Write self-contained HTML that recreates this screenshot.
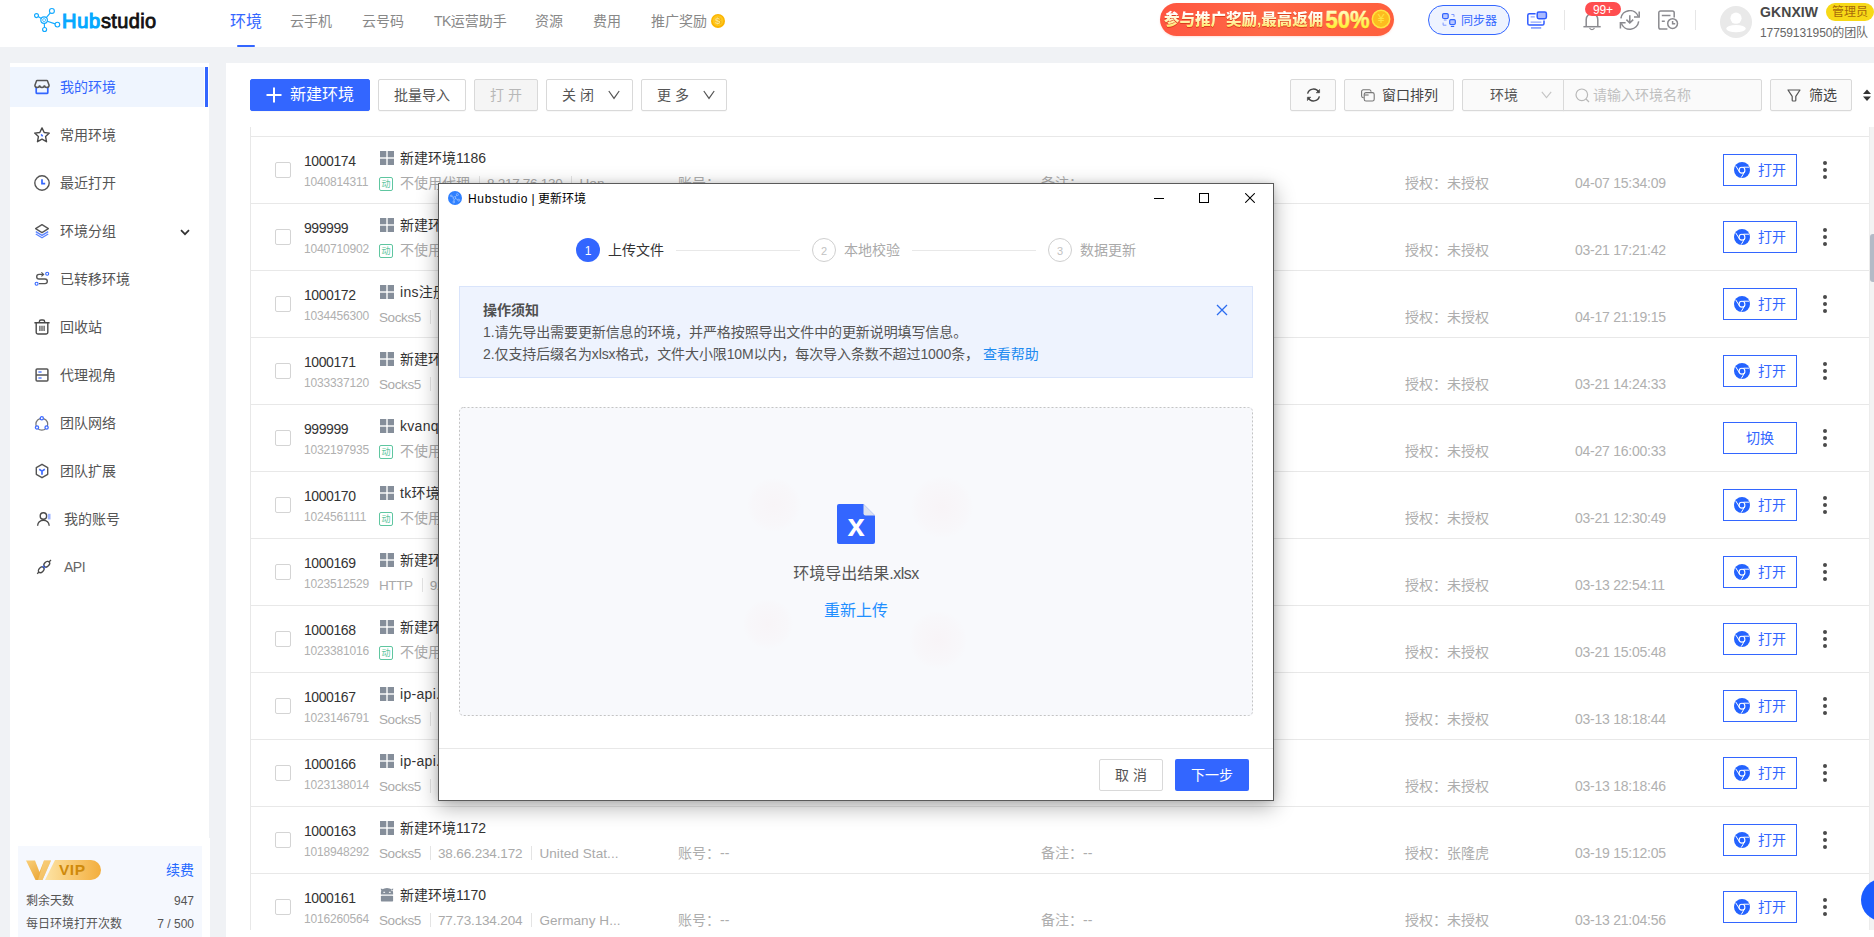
<!DOCTYPE html>
<html lang="zh-CN"><head><meta charset="utf-8"><title>Hubstudio</title>
<style>
*{box-sizing:border-box;margin:0;padding:0}
html,body{width:1874px;height:937px;overflow:hidden;background:#f0f2f5}
body{font-family:"Liberation Sans","Noto Sans CJK SC",sans-serif;font-size:14px;color:#333;-webkit-font-smoothing:antialiased}
#app{position:relative;width:1874px;height:937px;overflow:hidden;background:#f0f2f5}
i{font-style:normal}
b{font-weight:normal}
.abs{position:absolute}
svg{display:block}
/* header */
#hd{position:absolute;left:0;top:0;width:1874px;height:47px;background:#fff}
#hd .logo{position:absolute;left:33px;top:7px}
#hd .logot{position:absolute;left:62px;top:8px;font-size:20px;line-height:26px;font-weight:normal;letter-spacing:.36px;color:#111;white-space:nowrap;-webkit-text-stroke:.8px #111}
#hd .logot em{font-style:normal;color:#06a8ff;-webkit-text-stroke:1.15px #06a8ff;letter-spacing:.75px}
#hd .nav{position:absolute;top:11px;font-size:14px;line-height:20px;color:#888;white-space:nowrap}
#hd .nav.on{color:#3366ff;font-size:16px;top:11px;line-height:22px}
#hd .navbar{position:absolute;left:237px;top:45px;width:18px;height:2px;background:#3366ff;border-radius:1px}
#promo{position:absolute;left:1160px;top:3px;width:234px;height:33px;border-radius:17px;background:linear-gradient(100deg,#ff5540 0%,#ff6846 45%,#ff5f3d 100%);box-shadow:0 1px 2px rgba(255,90,60,.18);overflow:hidden;white-space:nowrap}
#promo .t{position:absolute;left:4px;top:5px;font-size:15.5px;line-height:24px;font-weight:900;letter-spacing:0;background:linear-gradient(#fff 25%,#ffe65a 85%);-webkit-background-clip:text;background-clip:text;color:transparent;filter:drop-shadow(0 1px .5px rgba(190,40,0,.55))}
#promo .n{position:absolute;left:165px;top:1px;font-size:24px;line-height:31px;font-weight:bold;letter-spacing:0;transform:scaleX(.93);transform-origin:0 50%;background:linear-gradient(#fffbd6 22%,#fff02a 78%);-webkit-background-clip:text;background-clip:text;color:transparent;filter:drop-shadow(0 1px .5px rgba(200,50,0,.5))}
#promo .coin{position:absolute;left:211px;top:6px;width:19px;height:19px;border-radius:50%;background:#fdbc1f;border:1.5px solid #ffe14a;font-size:11px;line-height:16px;text-align:center;color:#ffe14a;font-weight:normal}
#sync{position:absolute;left:1428px;top:5px;width:82px;height:30px;border:1px solid #3366ff;border-radius:15px;background:#eef3ff}
#sync span{position:absolute;left:32px;top:6px;font-size:12px;line-height:18px;color:#3366ff;white-space:nowrap}
#sync svg{position:absolute;left:13px;top:7px}
.vdiv{position:absolute;top:10px;width:1px;height:20px;background:#e6e6e6}
#badge{position:absolute;left:1585px;top:2px;width:36px;height:14px;border-radius:7px;background:#ff4d4f;color:#fff;font-size:12px;line-height:16px;text-align:center;letter-spacing:-.2px}
#avatar{position:absolute;left:1720px;top:6px;width:32px;height:32px;border-radius:50%;background:#e9e9e9;overflow:hidden}
#uname{position:absolute;left:1760px;top:2px;font-size:14px;line-height:20px;font-weight:bold;color:#484848;letter-spacing:.1px;white-space:nowrap}
#urole{position:absolute;left:1826px;top:3px;width:48px;height:18px;border-radius:9px;background:#f7d917;color:#a8690a;font-size:12px;line-height:19px;padding-left:6px;white-space:nowrap;overflow:hidden}
#uteam{position:absolute;left:1760px;top:24px;font-size:12px;line-height:18px;color:#666;white-space:nowrap;letter-spacing:-.1px}
/* sidebar */
#sb{position:absolute;left:10px;top:63px;width:199px;height:775px;background:#fff}
#sbb{position:absolute;left:10px;top:838px;width:200px;height:99px;background:#fff}
.mi{position:absolute;left:0;width:199px;height:40px;margin-top:-1px}
.mi.on:before{content:"";position:absolute;left:0;top:0;width:194px;height:40px;background:#eff5fe}
.mi.on:after{content:"";position:absolute;right:1px;top:0;width:3px;height:40px;background:#3366ff}
.mi svg{position:absolute;left:24px;top:12px}
.mi span{position:absolute;left:50px;top:9px;font-size:14px;line-height:22px;color:#555;white-space:nowrap}
.mi.on span{color:#3366ff}
#vip{position:absolute;left:18px;top:846px;width:184px;height:91px;background:#f5f8fe}
#vip .r{position:absolute;font-size:12px;line-height:18px;color:#555;white-space:nowrap}
/* main */
#main{position:absolute;left:226px;top:63px;width:1648px;height:874px;background:#fff}
.btn{position:absolute;top:79px;height:32px;border:1px solid #d9d9d9;border-radius:2px;background:#fff;font-size:14px;line-height:30px;color:#555;text-align:center;white-space:nowrap;box-shadow:0 1px 1px rgba(0,0,0,.03)}
.btn.pri{background:#3366ff;border-color:#3366ff;color:#fff;font-size:16px}
.btn.dis{background:#f5f5f5;color:#b8b8b8}
.btn.g{background:#fafafa}
/* table */
.tbl{position:absolute;left:0;top:0;width:1874px;height:937px;pointer-events:none}
.row{position:absolute;left:250px;width:1619px;height:67px;border-top:1px solid #e8e8e8}
.row span{position:absolute;white-space:nowrap}
.cb{left:25px;top:25px;width:16px;height:16px;border:1px solid #d4d4d4;border-radius:2px;background:#fff}
.no{left:54px;top:14px;font-size:14px;line-height:20px;color:#333;letter-spacing:-.42px}
.idn{left:54px;top:37px;font-size:12px;line-height:16px;color:#b0b0b0;letter-spacing:-.17px}
.osw{left:130px;top:14px;width:14px;height:14px}
.os{width:14px;height:14px;fill:#858e9a}
.nm{left:150px;top:11px;font-size:14px;line-height:20px;color:#333}
.nm.la{letter-spacing:.3px}
.dong{left:129px;top:40px;width:14px;height:14px;border:1px solid #5fc6a0;border-radius:2px;color:#5fc6a0;font-size:9px;line-height:13px;text-align:center}
.px{left:129px;top:37px;font-size:13.5px;line-height:20px;color:#aaa;letter-spacing:-.15px}
.px .p0{letter-spacing:-.38px}.px .p2{letter-spacing:.08px}
.px2{left:150px;top:36px;letter-spacing:0;font-size:14px}
.px2 .p0{letter-spacing:0}.px2 span+i+span,.px2 span+i+span+i+span{font-size:13.5px;letter-spacing:-.28px}
.px span{position:static!important}
.sep{display:inline-block;width:1px;height:14px;background:#e4e4e4;margin:0 7px 0 9px;vertical-align:-2px}
.acc{left:428px;top:36px;font-size:14px;line-height:20px;color:#adadad}
.note{left:791px;top:36px;font-size:14px;line-height:20px;color:#adadad}
.auth{left:1155px;top:36px;font-size:14px;line-height:20px;color:#adadad}
.date{left:1325px;top:36px;font-size:14px;line-height:20px;color:#b0b0b0;letter-spacing:-.24px}
.obtn{left:1473px;top:17px;width:74px;height:32px;border:1px solid #3366ff;border-radius:0;background:#fff}
.obtn .chr{position:absolute;left:10px;top:7px;width:16px;height:16px}
.obtn b{position:absolute;left:34px;top:5px;font-size:14px;line-height:20px;color:#3366ff}
.obtn.sw b{left:22px}
.dots{left:1572px;top:24px;width:6px;height:20px}
.dots i{position:absolute;left:1px;width:4px;height:4px;border-radius:50%;background:#4a4a4a}
.dots i:nth-child(1){top:0}.dots i:nth-child(2){top:7px}.dots i:nth-child(3){top:14px}
/* dialog */
#dlg{position:absolute;left:438px;top:183px;width:836px;height:618px;background:#fff;border:1px solid #5a5a5a;box-shadow:0 6px 20px rgba(0,0,0,.32),0 0 6px rgba(0,0,0,.12)}
#dlg .abs{white-space:nowrap}

</style></head>
<body>
<div id="app">
<div id="hd">
<svg class="logo" width="30" height="26" viewBox="0 0 30 26" fill="none" stroke="#12a9ff" stroke-width="1.15">
<circle cx="11.1" cy="13.1" r="3.3"/><circle cx="11.1" cy="13.1" r="1.5" stroke-width=".9" opacity=".8"/>
<circle cx="3.5" cy="8.6" r="1.95"/><circle cx="18.9" cy="3.9" r="2.45"/><circle cx="24.4" cy="17.6" r="2.35"/><circle cx="11.6" cy="22.5" r="2"/>
<path d="M5.2 9.6 L8.3 11.4 M13.3 10.6 L17.3 5.8 M14.3 14.2 L22.1 16.9 M11.3 16.4 L11.5 20.5"/>
</svg>
<div class="logot"><em>Hub</em>studio</div>
<div class="nav on" style="left:230px">环境</div>
<div class="navbar"></div>
<div class="nav" style="left:290px">云手机</div>
<div class="nav" style="left:362px">云号码</div>
<div class="nav" style="left:434px"><span style="letter-spacing:-.6px">TK</span>运营助手</div>
<div class="nav" style="left:535px">资源</div>
<div class="nav" style="left:593px">费用</div>
<div class="nav" style="left:651px">推广奖励</div>
<svg class="abs" style="left:711px;top:14px" width="14" height="14" viewBox="0 0 14 14"><circle cx="7" cy="7" r="7" fill="#fbb400"/><circle cx="7" cy="6.6" r="5.4" fill="#ffc61c"/><text x="7.5" y="10.4" font-size="9.5" font-weight="bold" text-anchor="middle" fill="#d98200" font-family="Liberation Sans,sans-serif">$</text><text x="7" y="10" font-size="9.5" font-weight="bold" text-anchor="middle" fill="#ffe98a" font-family="Liberation Sans,sans-serif">$</text></svg>

<div id="promo"><span class="t">参与推广奖励,最高返佣</span>
<svg class="abs" style="left:160px;top:0" width="74" height="33" viewBox="0 0 74 33"><defs><linearGradient id="pg" x1="0" y1="0" x2="0" y2="1"><stop offset=".1" stop-color="#fffde0"/><stop offset=".55" stop-color="#fff66a"/><stop offset=".95" stop-color="#ffee1c"/></linearGradient></defs>
<text x="5.5" y="25.6" font-size="24" font-weight="bold" font-family="Liberation Sans,sans-serif" textLength="44" lengthAdjust="spacingAndGlyphs" fill="#d8430c" opacity=".45">50%</text>
<text x="5.5" y="24.6" font-size="24" font-weight="bold" font-family="Liberation Sans,sans-serif" textLength="44" lengthAdjust="spacingAndGlyphs" fill="url(#pg)" stroke="url(#pg)" stroke-width=".5">50%</text>
<circle cx="61" cy="16" r="8.7" fill="#fdbc1f" stroke="#ffe341" stroke-width="1.5"/>
<text x="61" y="20.4" font-size="12" text-anchor="middle" font-family="Liberation Sans,sans-serif" fill="#ffe341">¥</text></svg></div>

<div id="sync"><svg width="15" height="15" viewBox="0 0 15 15" fill="none" stroke="#3366ff" stroke-width="1.2"><rect x=".6" y=".6" width="5.6" height="4.9" rx="1.2" fill="#b9c7ff"/><path d="M1.8 7 H4.6" stroke="#8fa6ff"/><rect x="7.7" y="6.6" width="5.6" height="4.9" rx="1.2" fill="#b9c7ff"/><path d="M8.8 13.4 H12.2"/><path d="M9.4 1.5 H12 V3.9 M1.1 9.6 V12.2 H4.4" stroke="#7d98ff" stroke-width="1"/></svg><span>同步器</span></div>

<svg class="abs" style="left:1526px;top:10px" width="22" height="20" viewBox="0 0 22 20" fill="none" stroke="#2f5bff" stroke-width="1.5">
<path d="M9.6 3.7 H3.4 a1.6 1.6 0 0 0 -1.6 1.6 V13.4 a1.6 1.6 0 0 0 1.6 1.6 H16.4 a1.6 1.6 0 0 0 1.6 -1.6 V10.4"/>
<rect x="11.2" y="1.9" width="9.2" height="6.8" rx="1.6" fill="#a9b9ff"/>
<path d="M4.6 6.9 H8.8 M4.6 12.1 H15.4" stroke="#8fa6ff" stroke-width="1.4"/><path d="M5 17.9 H15.2" stroke="#8fa6ff" stroke-width="1.8"/>
</svg>
<div class="vdiv" style="left:1564px"></div>
<svg class="abs" style="left:1583px;top:13px" width="18" height="19" viewBox="0 0 18 19" fill="none" stroke="#8a8a8f" stroke-width="1.5"><path d="M3.2 13.6 V6.4 a5.8 5.8 0 0 1 11.6 0 V13.6"/><path d="M0.4 13.7 H17.7"/><path d="M6.6 14.9 a2.5 2.4 0 0 0 4.8 0" stroke-width="1.2"/></svg>
<div id="badge">99+</div>
<svg class="abs" style="left:1619px;top:10px" width="22" height="20" viewBox="0 0 22 20" fill="none" stroke="#8a8a8f" stroke-width="1.5"><path d="M1.9 8.4 A9 9 0 0 1 19.3 6.6 M19.7 11.4 A9 9 0 0 1 2.3 13.2"/><path d="M20.2 1.4 V7 H15 M1.4 18.4 V12.8 H6.6"/><path d="M10.8 5.2 V12.8 M7.4 9.6 L10.8 13 L14.2 9.6"/></svg>
<svg class="abs" style="left:1658px;top:10px" width="21" height="20" viewBox="0 0 21 20" fill="none" stroke="#8a8a8f" stroke-width="1.5"><path d="M16.2 7.4 V2.8 a1.8 1.8 0 0 0 -1.8 -1.8 H2.6 a1.8 1.8 0 0 0 -1.8 1.8 V17.2 a1.8 1.8 0 0 0 1.8 1.8 H9.4"/><path d="M3.8 5.6 H12.5 M3.8 11.3 H6.8"/><circle cx="14.6" cy="13.6" r="4.9"/><path d="M14.6 11 V13.8 H17.2"/></svg>
<div class="vdiv" style="left:1695px"></div>
<div id="avatar"><svg width="32" height="32" viewBox="0 0 32 32"><circle cx="16" cy="12.2" r="5.6" fill="#fff"/><ellipse cx="16" cy="22.6" rx="9.8" ry="3.7" fill="#fff"/></svg></div>
<div id="uname">GKNXIW</div>
<div id="urole">管理员</div>
<div id="uteam">17759131950的团队</div>
</div>
<div id="sb">
<div class="mi on" style="top:5px"><svg width="16" height="16" viewBox="0 0 16 16" fill="none" stroke-width="1.5"><path d="M2.2 8 V13.4 a1 1 0 0 0 1 1 H12.8 a1 1 0 0 0 1 -1 V8" stroke="#3366ff" stroke-width="1.7"/><path d="M0.9 6.2 L2.5 1.9 a.8 .8 0 0 1 .7 -.5 H12.8 a.8 .8 0 0 1 .7 .5 L15.1 6.2 a2.35 2.2 0 0 1 -4.7 0 a2.35 2.2 0 0 1 -4.8 0 A2.35 2.2 0 0 1 .9 6.2 Z" stroke="#555"/></svg><span>我的环境</span></div>
<div class="mi" style="top:53px"><svg width="16" height="16" viewBox="0 0 16 16" fill="none" stroke="#4a4a4a" stroke-width="1.4" stroke-linejoin="round"><path d="M8 0.9 L10.2 5.5 L15.3 6.1 L11.6 9.6 L12.5 14.7 L8 12.2 L3.5 14.7 L4.4 9.6 L0.7 6.1 L5.8 5.5 Z"/><path d="M7.2 7.4 L8.6 9.4" stroke="#3366ff" stroke-width="1.6"/></svg><span>常用环境</span></div>
<div class="mi" style="top:101px"><svg width="16" height="16" viewBox="0 0 16 16" fill="none" stroke="#555" stroke-width="1.4"><circle cx="8" cy="8" r="7.2"/><path d="M8 4.2 V8.6 H11.2" stroke="#3366ff" stroke-width="1.7"/></svg><span>最近打开</span></div>
<div class="mi" style="top:149px"><svg width="16" height="16" viewBox="0 0 16 16" fill="none" stroke="#555" stroke-width="1.3" stroke-linejoin="round"><path d="M8 1.6 L14.4 5.6 L8 9.6 L1.6 5.6 Z"/><path d="M1.8 8.6 L8 12.4 L14.2 8.6 M1.8 11 L8 14.8 L14.2 11" stroke="#5b83ff"/></svg><span>环境分组</span>
<svg style="left:170px;top:18px" width="10" height="7" viewBox="0 0 10 7" fill="none" stroke="#333" stroke-width="1.7"><path d="M1 1.2 L5 5.2 L9 1.2"/></svg></div>
<div class="mi" style="top:197px"><svg width="16" height="16" viewBox="0 0 16 16" fill="none" stroke="#555" stroke-width="1.4"><path d="M9 3.4 H5 a2.3 2.3 0 0 0 0 4.6 H11 a2.3 2.3 0 0 1 0 4.6 H5"/><path d="M7.4 1.4 L9.6 3.4 L7.4 5.4" stroke-width="1.2"/><circle cx="13.2" cy="2.8" r="1.5" stroke="#3366ff" stroke-width="1.1"/><circle cx="2.6" cy="12.8" r="1.5" stroke="#3366ff" stroke-width="1.1"/></svg><span>已转移环境</span></div>
<div class="mi" style="top:245px"><svg width="16" height="16" viewBox="0 0 16 16" fill="none" stroke="#4a4a4a" stroke-width="1.4"><path d="M0.4 3.8 H15.6 M5.4 3.6 V2.6 a1.6 1.6 0 0 1 1.6 -1.6 H9 a1.6 1.6 0 0 1 1.6 1.6 V3.6 M2.2 4 V13.2 a1.8 1.8 0 0 0 1.8 1.8 H12 a1.8 1.8 0 0 0 1.8 -1.8 V4"/><path d="M5.9 6.8 V12 M8 6.8 V12 M10.1 6.8 V12" stroke-width="1.2"/></svg><span>回收站</span></div>
<div class="mi" style="top:293px"><svg width="16" height="16" viewBox="0 0 16 16" fill="none" stroke="#555" stroke-width="1.5"><rect x="2.1" y="2.1" width="11.8" height="11.8" rx="1"/><path d="M2.1 8 H13.9"/><path d="M4.4 5 H7.6 M4.4 11 H7.6" stroke="#5b83ff" stroke-width="1.4"/></svg><span>代理视角</span></div>
<div class="mi" style="top:341px"><svg width="16" height="16" viewBox="0 0 16 16" fill="none"><circle cx="7.8" cy="9.2" r="5.9" stroke="#777" stroke-width="1.2"/><g fill="#fff" stroke="#3f6bff" stroke-width="1.3"><circle cx="7.8" cy="3.3" r="1.6"/><circle cx="3" cy="12.5" r="1.6"/><circle cx="12.6" cy="12.5" r="1.6"/></g></svg><span>团队网络</span></div>
<div class="mi" style="top:389px"><svg width="16" height="16" viewBox="0 0 16 16" fill="none" stroke="#555" stroke-width="1.4" stroke-linejoin="round"><path d="M8 1.3 L13.7 4.65 V11.35 L8 14.7 L2.3 11.35 V4.65 Z"/><path d="M5.2 6.3 L8 8.1 L10.8 6.3 M8 8.1 V11.8" stroke="#3f6bff" stroke-width="1.7"/></svg><span>团队扩展</span></div>
<div class="mi" style="top:437px"><svg style="left:26px" width="16" height="16" viewBox="0 0 16 16" fill="none" stroke="#4a4a4a" stroke-width="1.4"><circle cx="7.4" cy="5" r="3.2"/><path d="M1.6 14.8 a5.8 5.6 0 0 1 11.6 0"/><rect x="11.8" y="2.8" width="2.7" height="5.6" fill="#9db4ff" stroke="none"/></svg><span style="left:54px">我的账号</span></div>
<div class="mi" style="top:485px"><svg style="left:26px" width="16" height="16" viewBox="0 0 16 16" fill="none" stroke="#4a4a4a" stroke-width="1.3"><path d="M1.2 14.8 L3.3 12.7 M12.7 3.3 L15 1"/><ellipse cx="5.2" cy="10.8" rx="2.3" ry="3.3" transform="rotate(45 5.2 10.8)"/><ellipse cx="10.8" cy="5.2" rx="2.3" ry="3.3" transform="rotate(45 10.8 5.2)"/><path d="M6.6 8 L8 6.6 M8 9.4 L9.4 8" stroke="#3f6bff" stroke-width="1.3"/></svg><span style="left:54px;color:#666;letter-spacing:-.5px">API</span></div>
</div>
<div id="sbb"></div>
<div id="vip">
<svg class="abs" style="left:8px;top:13px" width="76" height="22" viewBox="0 0 76 22"><defs><linearGradient id="vg" x1="0" y1="0" x2="1" y2="0"><stop offset="0" stop-color="#fde3a4"/><stop offset="1" stop-color="#f3ae3d"/></linearGradient><linearGradient id="vg2" x1="0" y1="0" x2="1" y2="1"><stop offset="0" stop-color="#f9cf7a"/><stop offset="1" stop-color="#e79a22"/></linearGradient></defs>
<path d="M29 1 H65 a10 10 0 0 1 0 20 H19 Z" fill="url(#vg)"/>
<path d="M0 1.4 H9 L13.5 13 L18 1.4 H25 L16.5 21 H9.5 Z" fill="url(#vg2)"/>
<path d="M18 1.4 H25 L16.5 21 H12 Z" fill="#fbd98e" opacity=".55"/>
<text x="33" y="16.2" font-size="15.5" font-weight="bold" fill="#cf8a0c" font-family="Liberation Sans,sans-serif" letter-spacing=".5">VIP</text></svg>
<div class="r" style="left:148px;top:13px;font-size:14px;line-height:22px;color:#2468ff">续费</div>
<div class="r" style="left:8px;top:46px">剩余天数</div><div class="r" style="right:8px;top:46px">947</div>
<div class="r" style="left:8px;top:69px">每日环境打开次数</div><div class="r" style="right:8px;top:69px">7 / 500</div>
</div>
<div id="main"></div>
<div class="btn pri" style="left:250px;width:120px"><svg class="abs" style="left:15px;top:7px" width="16" height="16" viewBox="0 0 16 16" stroke="#fff" stroke-width="2" fill="none"><path d="M8 0.5 V15.5 M0.5 8 H15.5"/></svg><span class="abs" style="left:39px;top:0">新建环境</span></div>
<div class="btn" style="left:378px;width:88px">批量导入</div>
<div class="btn dis" style="left:474px;width:64px">打 开</div>
<div class="btn" style="left:546px;width:87px"><span class="abs" style="left:15px;top:0">关 闭</span><svg class="abs" style="left:61px;top:10px" width="12" height="10" viewBox="0 0 12 10" fill="none" stroke="#555" stroke-width="1.2"><path d="M0.8 1 L6 8.4 L11.2 1"/></svg></div>
<div class="btn" style="left:641px;width:86px"><span class="abs" style="left:15px;top:0">更 多</span><svg class="abs" style="left:61px;top:10px" width="12" height="10" viewBox="0 0 12 10" fill="none" stroke="#555" stroke-width="1.2"><path d="M0.8 1 L6 8.4 L11.2 1"/></svg></div>

<div class="btn g" style="left:1290px;width:46px"><svg class="abs" style="left:15px;top:8px" width="15" height="14" viewBox="0 0 15 14" fill="none" stroke="#444" stroke-width="1.4"><path d="M1.6 5.6 A6 6 0 0 1 12.8 4.4 M13.4 8.4 A6 6 0 0 1 2.2 9.6"/><path d="M13.6 1.4 V4.8 H10.2 Z M1.4 12.6 V9.2 H4.8 Z" fill="#444" stroke-width=".6"/></svg></div>
<div class="btn g" style="left:1344px;width:110px"><svg class="abs" style="left:16px;top:9px" width="14" height="13" viewBox="0 0 14 13" fill="none" stroke="#777" stroke-width="1.1"><path d="M2.6 8.6 H2.2 a1.6 1.6 0 0 1 -1.6 -1.6 V2.4 a1.6 1.6 0 0 1 1.6 -1.6 H8.4 a1.6 1.6 0 0 1 1.6 1.6 V2.8"/><rect x="3.2" y="3.6" width="10" height="8.4" rx="1.8"/><path d="M3.4 6 H7.6"/></svg><span class="abs" style="left:37px;top:0;color:#444">窗口排列</span></div>
<div class="btn g" style="left:1462px;width:102px;border-radius:2px 0 0 2px"><span class="abs" style="left:27px;top:0;color:#555">环境</span><svg class="abs" style="left:78px;top:11px" width="11" height="8" viewBox="0 0 11 8" fill="none" stroke="#c4c4c4" stroke-width="1.1"><path d="M0.8 0.8 L5.5 6.6 L10.2 0.8"/></svg></div>
<div class="btn g" style="left:1563px;width:199px;border-radius:0 2px 2px 0;text-align:left"><svg class="abs" style="left:11px;top:8px" width="15" height="15" viewBox="0 0 15 15" fill="none" stroke="#b8b8b8" stroke-width="1.2"><circle cx="6.8" cy="6.8" r="5.8"/><path d="M11 11 L14 14"/></svg><span class="abs" style="left:29px;top:0;color:#c0c0c0">请输入环境名称</span></div>
<div class="btn g" style="left:1770px;width:82px"><svg class="abs" style="left:16px;top:9px" width="14" height="13" viewBox="0 0 14 13" fill="none" stroke="#555" stroke-width="1.2" stroke-linejoin="round"><path d="M1 1 H13 L8.8 7.4 V11.2 a.8 .8 0 0 1 -.8 .8 H6 a.8 .8 0 0 1 -.8 -.8 V7.4 Z"/></svg><span class="abs" style="left:38px;top:0;color:#444">筛选</span></div>
<svg class="abs" style="left:1862px;top:89px" width="10" height="13" viewBox="0 0 10 13" fill="#333"><path d="M1 5 L5 0.6 L9 5 Z M1 7.6 L5 12 L9 7.6 Z"/></svg>
<div class="abs" style="left:250px;top:127px;width:1px;height:803px;background:#e8e8e8"></div>
<div class="tbl">
<div class="row" style="top:136px"><span class="cb"></span><span class="no">1000174</span><span class="idn">1040814311</span><span class="osw"><svg class="os" viewBox="0 0 14 14"><rect x="0" y="0" width="6.3" height="6.3"/><rect x="7.7" y="0" width="6.3" height="6.3"/><rect x="0" y="7.7" width="6.3" height="6.3"/><rect x="7.7" y="7.7" width="6.3" height="6.3"/></svg></span><span class="nm">新建环境1186</span><span class="dong">动</span><span class="px px2"><span class="p0">不使用代理</span><i class="sep"></i><span class="p1">8.217.76.130</span><i class="sep"></i><span class="p2">Hon...</span></span><span class="acc">账号：</span><span class="note">备注：</span><span class="auth">授权：未授权</span><span class="date">04-07 15:34:09</span><span class="obtn"><svg class="chr" viewBox="0 0 16 16"><circle cx="8" cy="8" r="8" fill="#2463ff"/><circle cx="8" cy="8.2" r="2.9" fill="none" stroke="#fff" stroke-width="1.1"/><path d="M9.4 5.2 H15.2 M5.6 10 L1.8 4 M10.6 9.8 L7.2 15.6" stroke="#fff" stroke-width="1" fill="none"/></svg><b>打开</b></span><span class="dots"><i></i><i></i><i></i></span></div>
<div class="row" style="top:203px"><span class="cb"></span><span class="no">999999</span><span class="idn">1040710902</span><span class="osw"><svg class="os" viewBox="0 0 14 14"><rect x="0" y="0" width="6.3" height="6.3"/><rect x="7.7" y="0" width="6.3" height="6.3"/><rect x="0" y="7.7" width="6.3" height="6.3"/><rect x="7.7" y="7.7" width="6.3" height="6.3"/></svg></span><span class="nm">新建环境1185</span><span class="dong">动</span><span class="px px2"><span class="p0">不使用代理</span></span><span class="acc">账号：--</span><span class="note">备注：--</span><span class="auth">授权：未授权</span><span class="date">03-21 17:21:42</span><span class="obtn"><svg class="chr" viewBox="0 0 16 16"><circle cx="8" cy="8" r="8" fill="#2463ff"/><circle cx="8" cy="8.2" r="2.9" fill="none" stroke="#fff" stroke-width="1.1"/><path d="M9.4 5.2 H15.2 M5.6 10 L1.8 4 M10.6 9.8 L7.2 15.6" stroke="#fff" stroke-width="1" fill="none"/></svg><b>打开</b></span><span class="dots"><i></i><i></i><i></i></span></div>
<div class="row" style="top:270px"><span class="cb"></span><span class="no">1000172</span><span class="idn">1034456300</span><span class="osw"><svg class="os" viewBox="0 0 14 14"><rect x="0" y="0" width="6.3" height="6.3"/><rect x="7.7" y="0" width="6.3" height="6.3"/><rect x="0" y="7.7" width="6.3" height="6.3"/><rect x="7.7" y="7.7" width="6.3" height="6.3"/></svg></span><span class="nm la">ins注册</span><span class="px"><span class="p0">Socks5</span><i class="sep"></i><span class="p1">38.66.234.172</span></span><span class="acc">账号：--</span><span class="note">备注：--</span><span class="auth">授权：未授权</span><span class="date">04-17 21:19:15</span><span class="obtn"><svg class="chr" viewBox="0 0 16 16"><circle cx="8" cy="8" r="8" fill="#2463ff"/><circle cx="8" cy="8.2" r="2.9" fill="none" stroke="#fff" stroke-width="1.1"/><path d="M9.4 5.2 H15.2 M5.6 10 L1.8 4 M10.6 9.8 L7.2 15.6" stroke="#fff" stroke-width="1" fill="none"/></svg><b>打开</b></span><span class="dots"><i></i><i></i><i></i></span></div>
<div class="row" style="top:337px"><span class="cb"></span><span class="no">1000171</span><span class="idn">1033337120</span><span class="osw"><svg class="os" viewBox="0 0 14 14"><rect x="0" y="0" width="6.3" height="6.3"/><rect x="7.7" y="0" width="6.3" height="6.3"/><rect x="0" y="7.7" width="6.3" height="6.3"/><rect x="7.7" y="7.7" width="6.3" height="6.3"/></svg></span><span class="nm">新建环境1183</span><span class="px"><span class="p0">Socks5</span><i class="sep"></i><span class="p1">38.66.234.172</span></span><span class="acc">账号：--</span><span class="note">备注：--</span><span class="auth">授权：未授权</span><span class="date">03-21 14:24:33</span><span class="obtn"><svg class="chr" viewBox="0 0 16 16"><circle cx="8" cy="8" r="8" fill="#2463ff"/><circle cx="8" cy="8.2" r="2.9" fill="none" stroke="#fff" stroke-width="1.1"/><path d="M9.4 5.2 H15.2 M5.6 10 L1.8 4 M10.6 9.8 L7.2 15.6" stroke="#fff" stroke-width="1" fill="none"/></svg><b>打开</b></span><span class="dots"><i></i><i></i><i></i></span></div>
<div class="row" style="top:404px"><span class="cb"></span><span class="no">999999</span><span class="idn">1032197935</span><span class="osw"><svg class="os" viewBox="0 0 14 14"><rect x="0" y="0" width="6.3" height="6.3"/><rect x="7.7" y="0" width="6.3" height="6.3"/><rect x="0" y="7.7" width="6.3" height="6.3"/><rect x="7.7" y="7.7" width="6.3" height="6.3"/></svg></span><span class="nm la">kvanqi</span><span class="dong">动</span><span class="px px2"><span class="p0">不使用代理</span></span><span class="acc">账号：--</span><span class="note">备注：--</span><span class="auth">授权：未授权</span><span class="date">04-27 16:00:33</span><span class="obtn sw"><b>切换</b></span><span class="dots"><i></i><i></i><i></i></span></div>
<div class="row" style="top:471px"><span class="cb"></span><span class="no">1000170</span><span class="idn">1024561111</span><span class="osw"><svg class="os" viewBox="0 0 14 14"><rect x="0" y="0" width="6.3" height="6.3"/><rect x="7.7" y="0" width="6.3" height="6.3"/><rect x="0" y="7.7" width="6.3" height="6.3"/><rect x="7.7" y="7.7" width="6.3" height="6.3"/></svg></span><span class="nm la">tk环境</span><span class="dong">动</span><span class="px px2"><span class="p0">不使用代理</span></span><span class="acc">账号：--</span><span class="note">备注：--</span><span class="auth">授权：未授权</span><span class="date">03-21 12:30:49</span><span class="obtn"><svg class="chr" viewBox="0 0 16 16"><circle cx="8" cy="8" r="8" fill="#2463ff"/><circle cx="8" cy="8.2" r="2.9" fill="none" stroke="#fff" stroke-width="1.1"/><path d="M9.4 5.2 H15.2 M5.6 10 L1.8 4 M10.6 9.8 L7.2 15.6" stroke="#fff" stroke-width="1" fill="none"/></svg><b>打开</b></span><span class="dots"><i></i><i></i><i></i></span></div>
<div class="row" style="top:538px"><span class="cb"></span><span class="no">1000169</span><span class="idn">1023512529</span><span class="osw"><svg class="os" viewBox="0 0 14 14"><rect x="0" y="0" width="6.3" height="6.3"/><rect x="7.7" y="0" width="6.3" height="6.3"/><rect x="0" y="7.7" width="6.3" height="6.3"/><rect x="7.7" y="7.7" width="6.3" height="6.3"/></svg></span><span class="nm">新建环境1178</span><span class="px"><span class="p0">HTTP</span><i class="sep"></i><span class="p1">92.113.7.44</span></span><span class="acc">账号：--</span><span class="note">备注：--</span><span class="auth">授权：未授权</span><span class="date">03-13 22:54:11</span><span class="obtn"><svg class="chr" viewBox="0 0 16 16"><circle cx="8" cy="8" r="8" fill="#2463ff"/><circle cx="8" cy="8.2" r="2.9" fill="none" stroke="#fff" stroke-width="1.1"/><path d="M9.4 5.2 H15.2 M5.6 10 L1.8 4 M10.6 9.8 L7.2 15.6" stroke="#fff" stroke-width="1" fill="none"/></svg><b>打开</b></span><span class="dots"><i></i><i></i><i></i></span></div>
<div class="row" style="top:605px"><span class="cb"></span><span class="no">1000168</span><span class="idn">1023381016</span><span class="osw"><svg class="os" viewBox="0 0 14 14"><rect x="0" y="0" width="6.3" height="6.3"/><rect x="7.7" y="0" width="6.3" height="6.3"/><rect x="0" y="7.7" width="6.3" height="6.3"/><rect x="7.7" y="7.7" width="6.3" height="6.3"/></svg></span><span class="nm">新建环境1177</span><span class="dong">动</span><span class="px px2"><span class="p0">不使用代理</span></span><span class="acc">账号：--</span><span class="note">备注：--</span><span class="auth">授权：未授权</span><span class="date">03-21 15:05:48</span><span class="obtn"><svg class="chr" viewBox="0 0 16 16"><circle cx="8" cy="8" r="8" fill="#2463ff"/><circle cx="8" cy="8.2" r="2.9" fill="none" stroke="#fff" stroke-width="1.1"/><path d="M9.4 5.2 H15.2 M5.6 10 L1.8 4 M10.6 9.8 L7.2 15.6" stroke="#fff" stroke-width="1" fill="none"/></svg><b>打开</b></span><span class="dots"><i></i><i></i><i></i></span></div>
<div class="row" style="top:672px"><span class="cb"></span><span class="no">1000167</span><span class="idn">1023146791</span><span class="osw"><svg class="os" viewBox="0 0 14 14"><rect x="0" y="0" width="6.3" height="6.3"/><rect x="7.7" y="0" width="6.3" height="6.3"/><rect x="0" y="7.7" width="6.3" height="6.3"/><rect x="7.7" y="7.7" width="6.3" height="6.3"/></svg></span><span class="nm la">ip-api.com</span><span class="px"><span class="p0">Socks5</span><i class="sep"></i><span class="p1">38.66.234.172</span></span><span class="acc">账号：--</span><span class="note">备注：--</span><span class="auth">授权：未授权</span><span class="date">03-13 18:18:44</span><span class="obtn"><svg class="chr" viewBox="0 0 16 16"><circle cx="8" cy="8" r="8" fill="#2463ff"/><circle cx="8" cy="8.2" r="2.9" fill="none" stroke="#fff" stroke-width="1.1"/><path d="M9.4 5.2 H15.2 M5.6 10 L1.8 4 M10.6 9.8 L7.2 15.6" stroke="#fff" stroke-width="1" fill="none"/></svg><b>打开</b></span><span class="dots"><i></i><i></i><i></i></span></div>
<div class="row" style="top:739px"><span class="cb"></span><span class="no">1000166</span><span class="idn">1023138014</span><span class="osw"><svg class="os" viewBox="0 0 14 14"><rect x="0" y="0" width="6.3" height="6.3"/><rect x="7.7" y="0" width="6.3" height="6.3"/><rect x="0" y="7.7" width="6.3" height="6.3"/><rect x="7.7" y="7.7" width="6.3" height="6.3"/></svg></span><span class="nm la">ip-api.com</span><span class="px"><span class="p0">Socks5</span><i class="sep"></i><span class="p1">38.66.234.172</span></span><span class="acc">账号：--</span><span class="note">备注：--</span><span class="auth">授权：未授权</span><span class="date">03-13 18:18:46</span><span class="obtn"><svg class="chr" viewBox="0 0 16 16"><circle cx="8" cy="8" r="8" fill="#2463ff"/><circle cx="8" cy="8.2" r="2.9" fill="none" stroke="#fff" stroke-width="1.1"/><path d="M9.4 5.2 H15.2 M5.6 10 L1.8 4 M10.6 9.8 L7.2 15.6" stroke="#fff" stroke-width="1" fill="none"/></svg><b>打开</b></span><span class="dots"><i></i><i></i><i></i></span></div>
<div class="row" style="top:806px"><span class="cb"></span><span class="no">1000163</span><span class="idn">1018948292</span><span class="osw"><svg class="os" viewBox="0 0 14 14"><rect x="0" y="0" width="6.3" height="6.3"/><rect x="7.7" y="0" width="6.3" height="6.3"/><rect x="0" y="7.7" width="6.3" height="6.3"/><rect x="7.7" y="7.7" width="6.3" height="6.3"/></svg></span><span class="nm">新建环境1172</span><span class="px"><span class="p0">Socks5</span><i class="sep"></i><span class="p1">38.66.234.172</span><i class="sep"></i><span class="p2">United Stat...</span></span><span class="acc">账号：--</span><span class="note">备注：--</span><span class="auth">授权：张隆虎</span><span class="date">03-19 15:12:05</span><span class="obtn"><svg class="chr" viewBox="0 0 16 16"><circle cx="8" cy="8" r="8" fill="#2463ff"/><circle cx="8" cy="8.2" r="2.9" fill="none" stroke="#fff" stroke-width="1.1"/><path d="M9.4 5.2 H15.2 M5.6 10 L1.8 4 M10.6 9.8 L7.2 15.6" stroke="#fff" stroke-width="1" fill="none"/></svg><b>打开</b></span><span class="dots"><i></i><i></i><i></i></span></div>
<div class="row" style="top:873px"><span class="cb"></span><span class="no">1000161</span><span class="idn">1016260564</span><span class="osw"><svg class="os" style="height:15px" viewBox="0 1.2 14 15"><path d="M0.9 7.7 V5.6 Q0.9 1.7 7 1.3 Q13.1 1.7 13.1 5.6 V7.7 Z M0.6 1.9 L2.2 1.9 L3 3.8 L1.4 4 Z M13.4 1.9 L11.8 1.9 L11 3.8 L12.6 4 Z"/><rect x="0.9" y="9" width="12.2" height="5.7" rx=".7"/><rect x="3.3" y="5" width="1.8" height="1" fill="#fff"/><rect x="8.9" y="5" width="1.8" height="1" fill="#fff"/></svg></span><span class="nm">新建环境1170</span><span class="px"><span class="p0">Socks5</span><i class="sep"></i><span class="p1">77.73.134.204</span><i class="sep"></i><span class="p2">Germany H...</span></span><span class="acc">账号：--</span><span class="note">备注：--</span><span class="auth">授权：未授权</span><span class="date">03-13 21:04:56</span><span class="obtn"><svg class="chr" viewBox="0 0 16 16"><circle cx="8" cy="8" r="8" fill="#2463ff"/><circle cx="8" cy="8.2" r="2.9" fill="none" stroke="#fff" stroke-width="1.1"/><path d="M9.4 5.2 H15.2 M5.6 10 L1.8 4 M10.6 9.8 L7.2 15.6" stroke="#fff" stroke-width="1" fill="none"/></svg><b>打开</b></span><span class="dots"><i></i><i></i><i></i></span></div>
</div>
<div class="abs" style="left:1869px;top:127px;width:5px;height:803px;background:#f3f3f3;border-left:1px solid #ececec"></div>
<div class="abs" style="left:1870px;top:234px;width:7px;height:48px;border-radius:3px;background:#b3bac6"></div>
<div class="abs" style="left:250px;top:930px;width:1624px;height:7px;background:#fff"></div>
<div class="abs" style="left:1861px;top:879px;width:42px;height:42px;border-radius:50%;background:#1a5cff"></div>
<div id="dlg">
<svg class="abs" style="left:9px;top:7px" width="14" height="14" viewBox="0 0 14 14"><circle cx="7" cy="7" r="7" fill="#2f80ff"/><g fill="none" stroke="#a9ccff" stroke-width=".8" opacity=".85"><circle cx="6.4" cy="7" r="1.3"/><circle cx="9.4" cy="3.6" r="1"/><circle cx="10.8" cy="9.2" r="1"/><circle cx="3.2" cy="4.8" r=".8"/><circle cx="5.8" cy="11" r=".9"/><path d="M7.2 6 L8.8 4.2 M7.6 7.6 L9.9 8.8 M5.3 6.4 L3.8 5.2 M6.2 8.3 L5.9 10.1"/></g></svg>
<div class="abs" style="left:29px;top:6px;font-size:12px;line-height:18px;color:#000"><span style="letter-spacing:.68px">Hubstudio</span> | 更新环境</div>
<svg class="abs" style="left:715px;top:14px" width="10" height="1" viewBox="0 0 10 1"><rect width="10" height="1" fill="#000"/></svg>
<svg class="abs" style="left:760px;top:9px" width="10" height="10" viewBox="0 0 10 10"><rect x=".5" y=".5" width="9" height="9" fill="none" stroke="#000" stroke-width="1"/></svg>
<svg class="abs" style="left:806px;top:9px" width="10" height="10" viewBox="0 0 10 10"><path d="M.2 .2 L9.8 9.8 M9.8 .2 L.2 9.8" stroke="#000" stroke-width="1.05"/></svg>

<!-- steps -->
<div class="abs" style="left:137px;top:54px;width:24px;height:24px;border-radius:50%;background:#3366ff;color:#fff;font-size:12px;line-height:27px;text-align:center">1</div>
<div class="abs" style="left:169px;top:55px;font-size:14px;line-height:22px;color:#333">上传文件</div>
<div class="abs" style="left:237px;top:66px;width:124px;height:1px;background:#e8e8e8"></div>
<div class="abs" style="left:373px;top:54px;width:24px;height:24px;border-radius:50%;border:1px solid #cfcfcf;color:#c2c2c2;font-size:11px;line-height:24px;text-align:center">2</div>
<div class="abs" style="left:405px;top:55px;font-size:14px;line-height:22px;color:#aaa">本地校验</div>
<div class="abs" style="left:473px;top:66px;width:124px;height:1px;background:#e8e8e8"></div>
<div class="abs" style="left:609px;top:54px;width:24px;height:24px;border-radius:50%;border:1px solid #cfcfcf;color:#c2c2c2;font-size:11px;line-height:24px;text-align:center">3</div>
<div class="abs" style="left:641px;top:55px;font-size:14px;line-height:22px;color:#aaa">数据更新</div>

<!-- alert -->
<div class="abs" style="left:20px;top:102px;width:794px;height:92px;background:#eef3fe;border:1px solid #d9e4fb"></div>
<div class="abs" style="left:44px;top:115px;font-size:14px;line-height:22px;color:#505050;font-weight:bold">操作须知</div>
<div class="abs" style="left:44px;top:137px;font-size:14px;line-height:22px;color:#555;letter-spacing:-.1px">1.请先导出需要更新信息的环境，并严格按照导出文件中的更新说明填写信息。</div>
<div class="abs" style="left:44px;top:159px;font-size:14px;line-height:22px;color:#555;letter-spacing:-.1px">2.仅支持后缀名为xlsx格式，文件大小限10M以内，每次导入条数不超过1000条，<span style="color:#1e8bf0;margin-left:4px">查看帮助</span></div>
<svg class="abs" style="left:777px;top:120px" width="12" height="12" viewBox="0 0 12 12"><path d="M1 1 L11 11 M11 1 L1 11" stroke="#2b6cf0" stroke-width="1.3"/></svg>

<!-- upload -->
<div class="abs" style="left:20px;top:223px;width:794px;height:309px;background:#f8f9fc;border-radius:4px;overflow:hidden"><svg class="abs" style="left:0;top:0" width="794" height="309"><rect x=".5" y=".5" width="793" height="308" rx="4" fill="none" stroke="#c4c4c4" stroke-width="1" stroke-dasharray="2 2"/></svg>
<i class="abs" style="left:288px;top:71px;width:54px;height:54px;border-radius:50%;background:radial-gradient(circle,rgba(255,120,125,.036),rgba(255,120,125,.016) 55%,rgba(255,130,120,0) 72%)"></i>
<i class="abs" style="left:452px;top:69px;width:62px;height:62px;border-radius:50%;background:radial-gradient(circle,rgba(255,120,125,.04),rgba(255,120,125,.016) 55%,rgba(255,130,120,0) 72%)"></i>
<i class="abs" style="left:284px;top:192px;width:50px;height:50px;border-radius:50%;background:radial-gradient(circle,rgba(255,120,125,.036),rgba(255,120,125,.016) 55%,rgba(255,130,120,0) 72%)"></i>
<i class="abs" style="left:450px;top:204px;width:58px;height:58px;border-radius:50%;background:radial-gradient(circle,rgba(255,120,125,.04),rgba(255,120,125,.016) 55%,rgba(255,130,120,0) 72%)"></i>
</div>
<svg class="abs" style="left:398px;top:320px" width="38" height="40" viewBox="0 0 38 40"><path d="M2 0 H26.5 L38 11.5 V38 a2 2 0 0 1 -2 2 H2 a2 2 0 0 1 -2 -2 V2 a2 2 0 0 1 2 -2 Z" fill="#3366ff"/><path d="M26.5 0 L38 11.5 H28.5 a2 2 0 0 1 -2 -2 Z" fill="#dde2ef"/><text x="19" y="32.2" font-size="31" font-weight="bold" fill="#fff" text-anchor="middle" font-family="Liberation Sans,sans-serif">x</text></svg>
<div class="abs" style="left:0;top:378px;width:834px;text-align:center;font-size:16px;line-height:24px;color:#555">环境导出结果<span style="letter-spacing:-.5px">.xlsx</span></div>
<div class="abs" style="left:0;top:415px;width:834px;text-align:center;font-size:16px;line-height:24px;color:#1f8fff">重新上传</div>

<!-- footer -->
<div class="abs" style="left:0;top:564px;width:834px;height:1px;background:#e8e8e8"></div>
<div class="abs" style="left:660px;top:575px;width:64px;height:32px;border:1px solid #d9d9d9;border-radius:2px;font-size:14px;line-height:30px;text-align:center;color:#555">取 消</div>
<div class="abs" style="left:736px;top:575px;width:74px;height:32px;border-radius:2px;background:#3366ff;font-size:14px;line-height:32px;text-align:center;color:#fff">下一步</div>
</div>
</div>
</body></html>
